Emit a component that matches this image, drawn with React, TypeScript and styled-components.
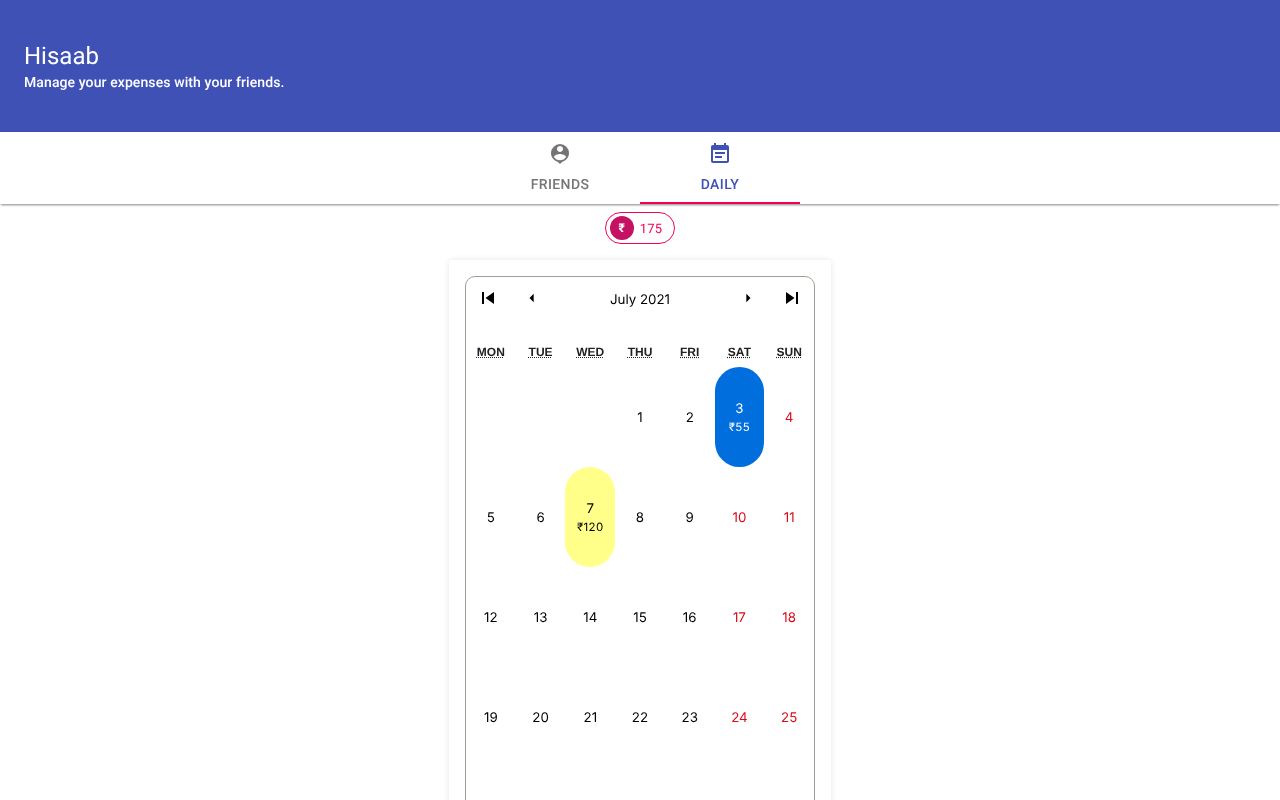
import React, { FC } from 'react';
import styled, { createGlobalStyle } from 'styled-components';
import {
  MdArrowLeft,
  MdArrowRight,
  MdEventNote,
  MdPersonPin,
  MdSkipNext,
  MdSkipPrevious,
} from 'react-icons/md';

const GlobalStyle = createGlobalStyle`
  html, body {
    margin: 0;
    height: 100%;
    overflow: hidden;
    background: #fff;
    font-family: Roboto, "Liberation Sans", sans-serif;
    text-rendering: geometricPrecision;
  }
  #root {
    will-change: transform;
  }
`;

const Header = styled.header`
  display: flex;
  flex-direction: column;
  justify-content: center;
  height: 132px;
  padding: 0 24px;
  box-sizing: border-box;
  background: #3f51b5;
  color: #fff;
`;

const Title = styled.h1`
  margin: 0;
  font-size: 24px;
  line-height: 32px;
  font-weight: 400;
`;

const Subtitle = styled.p`
  margin: 1px 0 0;
  font-size: 14px;
  line-height: 20px;
  font-weight: 500;
  letter-spacing: 0.1px;
`;

const TabBar = styled.nav`
  display: flex;
  justify-content: center;
  height: 72px;
  background: #fff;
  box-shadow: 0 2px 2px -1px rgba(0, 0, 0, 0.4), 0 1px 3px 0 rgba(0, 0, 0, 0.12);
`;

const Tab = styled.div<{ $active?: boolean }>`
  display: flex;
  flex-direction: column;
  align-items: center;
  width: 160px;
  box-sizing: border-box;
  padding-top: 10px;
  color: ${props => (props.$active ? '#3f51b5' : '#757575')};
  border-bottom: 2px solid ${props => (props.$active ? '#f50057' : 'transparent')};
  font-size: 14px;
  line-height: 24px;
  font-weight: 500;
  letter-spacing: 0.4px;
  text-transform: uppercase;
  svg {
    margin-bottom: 7px;
  }
`;

const Main = styled.main`
  display: flex;
  flex-direction: column;
  align-items: center;
  padding-top: 8px;
`;

const Chip = styled.div`
  display: flex;
  align-items: center;
  height: 32px;
  box-sizing: border-box;
  border: 1px solid #f50057;
  border-radius: 16px;
  padding: 0 12px 0 4px;
  color: #f50057;
  font-size: 13px;
  letter-spacing: 0.2px;
`;

const ChipAvatar = styled.span`
  display: flex;
  align-items: center;
  justify-content: center;
  width: 24px;
  height: 24px;
  margin-right: 6px;
  border-radius: 50%;
  background: #c51162;
  color: #fff;
  font-size: 12px;
  font-weight: 700;
`;

const ChipLabel = styled.span`
  padding-top: 2px;
`;

const Card = styled.section`
  width: 382px;
  box-sizing: border-box;
  margin-top: 16px;
  padding: 16px;
  background: #fff;
  border-radius: 4px;
  box-shadow: 0 0 6px rgba(0, 0, 0, 0.1);
`;

const Calendar = styled.div`
  border: 1px solid #a0a096;
  border-radius: 10px;
  font-family: Inter, "Liberation Sans", sans-serif;
  font-size: 13.33px;
  color: #000;
`;

const CalendarNav = styled.div`
  display: flex;
  height: 44px;
  margin-bottom: 16px;
`;

const NavButton = styled.button`
  display: flex;
  align-items: center;
  justify-content: center;
  width: 44px;
  padding: 0 0 2px;
  border: 0;
  background: none;
  color: #000;
`;

const NavLabel = styled.span`
  flex: 1;
  align-self: center;
  padding-top: 2px;
  text-align: center;
`;

const WeekGrid = styled.div`
  display: grid;
  grid-template-columns: repeat(7, 1fr);
`;

const Weekday = styled.abbr`
  display: flex;
  align-items: center;
  justify-content: center;
  height: 30px;
  font-family: "Liberation Sans", Arial, sans-serif;
  font-size: 12px;
  font-weight: 700;
  color: #222;
  text-decoration: underline dotted;
`;

type TileKind = 'plain' | 'blue' | 'yellow';

const Tile = styled.div<{ $kind: TileKind; $weekend: boolean }>`
  display: flex;
  flex-direction: column;
  align-items: center;
  justify-content: center;
  height: 100px;
  box-sizing: border-box;
  padding-top: 2px;
  border-radius: 25px;
  background: ${props =>
    props.$kind === 'blue' ? '#006edc' : props.$kind === 'yellow' ? '#ffff8a' : 'transparent'};
  color: ${props =>
    props.$kind === 'blue' ? '#fff' : props.$weekend ? '#dc0a1a' : '#000'};
`;

const Amount = styled.span`
  margin: 2px 0 1px;
  font-size: 11.5px;
  line-height: 16px;
  letter-spacing: 0.4px;
`;

const weekdays = ['Mon', 'Tue', 'Wed', 'Thu', 'Fri', 'Sat', 'Sun'];

const amounts: Record<number, { kind: TileKind; value: string }> = {
  3: { kind: 'blue', value: '₹55' },
  7: { kind: 'yellow', value: '₹120' },
};

const days = Array.from({ length: 31 }, (_, i) => i + 1);

const Day: FC<{ day: number; column: number }> = ({ day, column }) => {
  const entry = amounts[day];
  return (
    <Tile $kind={entry ? entry.kind : 'plain'} $weekend={column >= 5} style={{ gridColumnStart: column + 1 }}>
      <span>{day}</span>
      {entry && <Amount>{entry.value}</Amount>}
    </Tile>
  );
};

export default function App() {
  return (
    <>
      <GlobalStyle />
      <Header>
        <Title>Hisaab</Title>
        <Subtitle>Manage your expenses with your friends.</Subtitle>
      </Header>
      <TabBar>
        <Tab>
          <MdPersonPin size={24} />
          Friends
        </Tab>
        <Tab $active>
          <MdEventNote size={24} />
          Daily
        </Tab>
      </TabBar>
      <Main>
        <Chip>
          <ChipAvatar>₹</ChipAvatar>
          <ChipLabel>175</ChipLabel>
        </Chip>
        <Card>
          <Calendar>
            <CalendarNav>
              <NavButton><MdSkipPrevious size={24} /></NavButton>
              <NavButton><MdArrowLeft size={20} /></NavButton>
              <NavLabel>July 2021</NavLabel>
              <NavButton><MdArrowRight size={20} /></NavButton>
              <NavButton><MdSkipNext size={24} /></NavButton>
            </CalendarNav>
            <WeekGrid>
              {weekdays.map(name => (
                <Weekday key={name} title={name}>{name.toUpperCase()}</Weekday>
              ))}
              {days.map(day => (
                <Day key={day} day={day} column={(day + 2) % 7} />
              ))}
            </WeekGrid>
          </Calendar>
        </Card>
      </Main>
    </>
  );
}
